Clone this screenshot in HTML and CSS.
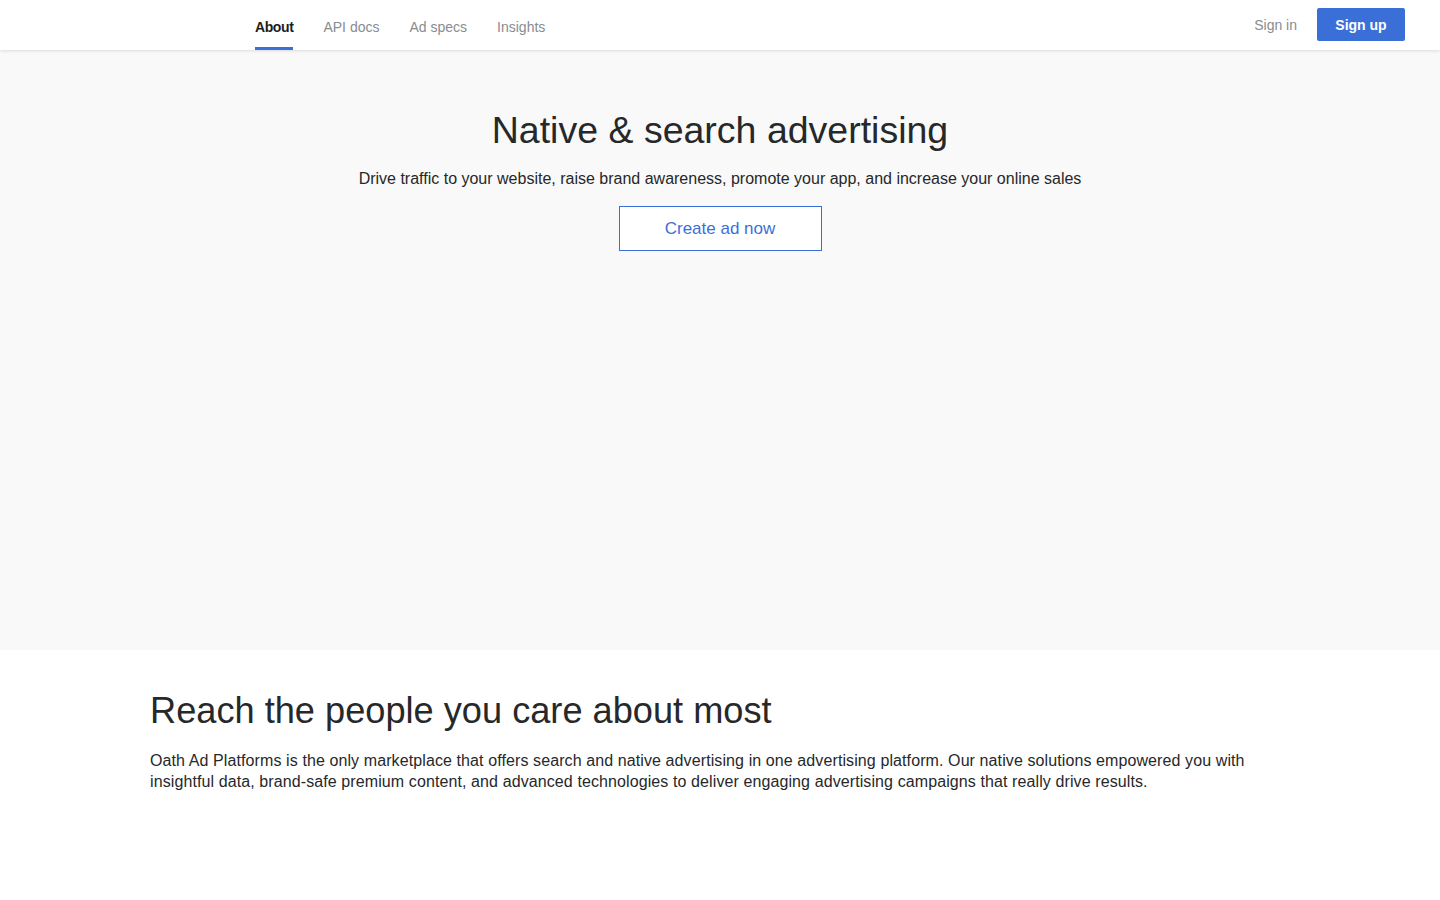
FILE: index.html
```html
<!DOCTYPE html>
<html lang="en">
<head>
<meta charset="utf-8">
<title>Native & search advertising</title>
<link rel="stylesheet" href="styles.css">
</head>
<body>
<header class="topbar">
  <nav class="nav">
    <a class="nav-link active" href="#">About</a>
    <a class="nav-link" href="#">API docs</a>
    <a class="nav-link" href="#">Ad specs</a>
    <a class="nav-link" href="#">Insights</a>
  </nav>
  <div class="auth">
    <a class="signin" href="#">Sign in</a>
    <a class="signup" href="#">Sign up</a>
  </div>
</header>
<section class="hero">
  <h1 class="hero-title">Native &amp; search advertising</h1>
  <p class="hero-sub">Drive traffic to your website, raise brand awareness, promote your app, and increase your online sales</p>
  <a class="cta" href="#">Create ad now</a>
</section>
<section class="reach">
  <h2 class="reach-title">Reach the people you care about most</h2>
  <p class="reach-text">Oath Ad Platforms is the only marketplace that offers search and native advertising in one advertising platform. Our native solutions empowered you with insightful data, brand-safe premium content, and advanced technologies to deliver engaging advertising campaigns that really drive results.</p>
</section>
</body>
</html>
```
FILE: styles.css
```css
* { box-sizing: border-box; }
html, body { margin: 0; padding: 0; }
body {
  font-family: "Liberation Sans", Arial, sans-serif;
  color: #26282a;
  background: #fff;
}
a { text-decoration: none; }

.topbar {
  height: 50px;
  background: #fff;
  display: flex;
  align-items: stretch;
  justify-content: space-between;
  padding: 0 35px 0 255px;
  box-shadow: 0 1px 3px rgba(0,0,0,0.12);
  position: relative;
  z-index: 2;
}
.nav { display: flex; gap: 30px; }
.nav-link {
  display: flex;
  align-items: center;
  padding-top: 6px;
  font-size: 14px;
  color: #878c91;
  border-bottom: 3px solid transparent;
}
.nav-link.active {
  color: #1d1d1f;
  font-weight: 600;
  letter-spacing: -0.4px;
  border-bottom-color: #3b6fd8;
}
.auth { display: flex; align-items: center; gap: 20px; padding-bottom: 1px; }
.signin { font-size: 14px; color: #878c91; }
.signup {
  background: #3b6fd8;
  color: #fff;
  font-size: 14px;
  font-weight: 600;
  width: 88px;
  height: 33px;
  display: flex;
  align-items: center;
  justify-content: center;
  border-radius: 2px;
}

.hero {
  background: #f9f9f9;
  height: 600px;
  display: flex;
  flex-direction: column;
  align-items: center;
  padding-top: 57px;
}
.hero-title {
  margin: 0;
  font-size: 37.5px;
  font-weight: 400;
  color: #26282a;
  line-height: 46px;
}
.hero-sub {
  margin: 16px 0 0;
  font-size: 16px;
  line-height: 20px;
  color: #26282a;
}
.cta {
  margin-top: 17px;
  width: 203px;
  height: 45px;
  border: 1px solid #3b6fd8;
  color: #3b6fd8;
  font-size: 17px;
  display: flex;
  align-items: center;
  justify-content: center;
  background: #fff;
}

.reach { padding: 38px 150px 0; }
.reach-title {
  margin: 0;
  font-size: 36.2px;
  font-weight: 400;
  line-height: 46px;
  color: #26282a;
}
.reach-text {
  margin: 16px 0 0;
  font-size: 16px;
  letter-spacing: 0.1px;
  line-height: 21px;
  color: #26282a;
}
```
